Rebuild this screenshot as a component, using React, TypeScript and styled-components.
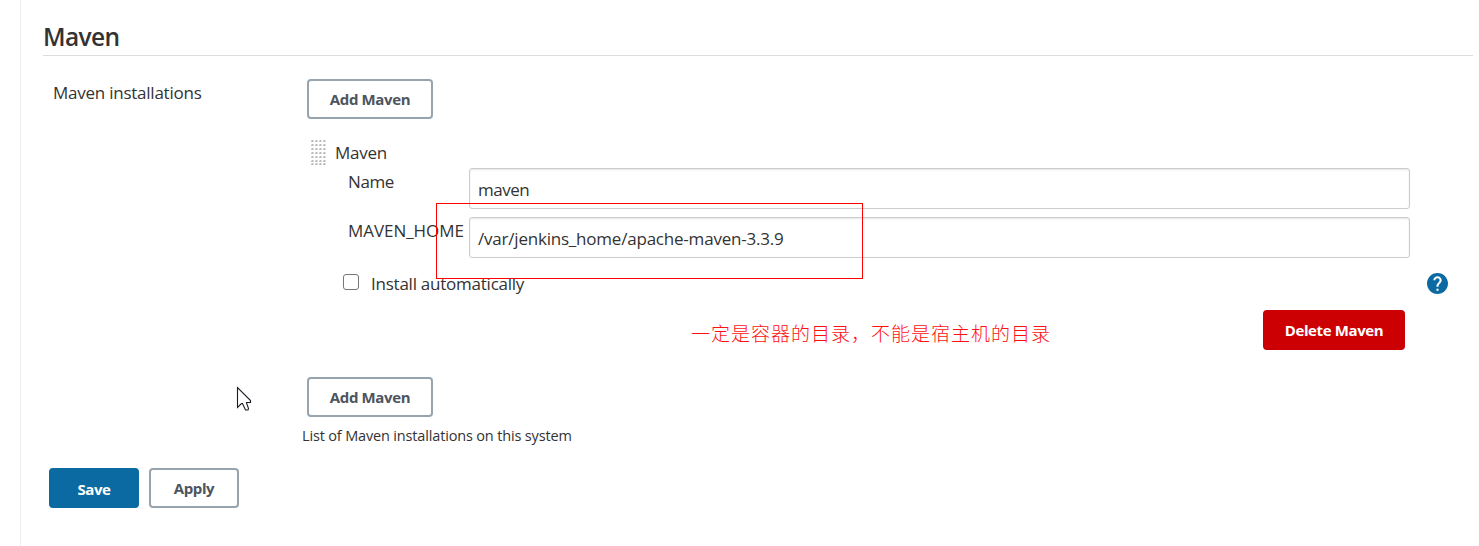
import React from "react";
import styled, { createGlobalStyle } from "styled-components";

const GlobalStyle = createGlobalStyle`
  *, *::before, *::after { box-sizing: border-box; }
  body {
    margin: 0;
    background: #fff;
    color: #333;
    font-family: "Open Sans", "Noto Sans", sans-serif;
    font-size: 17px;
    overflow: hidden;
  }
`;

const Page = styled.main`
  position: relative;
  width: 1479px;
  height: 546px;
  padding-left: 20px;
`;

const Panel = styled.section`
  height: 100%;
  padding: 20px 6px 0 22px;
  border-left: 1px solid #eaeff2;
`;

const SectionTitle = styled.h2`
  height: 36px;
  margin: 0;
  border-bottom: 1px solid #dddddd;
  font-size: 24.5px;
  font-weight: 600;
  line-height: 34px;
  letter-spacing: -0.6px;
`;

const Text = styled.span<{ $track?: number }>`
  display: block;
  line-height: 24px;
  white-space: nowrap;
  letter-spacing: ${(p) => p.$track ?? -0.24}px;
`;

const FormRow = styled.div`
  display: grid;
  grid-template-columns: 259px 1fr;
  padding-top: 23px;
`;

const SettingName = styled.div`
  padding: 2px 0 0 10px;
`;

const Setting = styled.div`
  display: flex;
  flex-direction: column;
`;

const Button = styled.button<{ $kind?: "primary" | "danger"; $width: number }>`
  width: ${(p) => p.$width}px;
  height: 40px;
  padding: ${(p) => (p.$kind === "primary" ? "2px 0 0" : "0")};
  border: 2px solid
    ${(p) => (p.$kind === "primary" ? "#0b6aa2" : p.$kind === "danger" ? "#cc0003" : "#98a4ad")};
  border-radius: 4px;
  background: ${(p) => (p.$kind === "primary" ? "#0b6aa2" : p.$kind === "danger" ? "#cc0003" : "#fff")};
  color: ${(p) => (p.$kind ? "#fff" : "#4d545d")};
  font: 700 15px/20px "Open Sans", "Noto Sans", sans-serif;
  letter-spacing: -0.38px;
  white-space: nowrap;
`;

const AddSlot = styled.div`
  padding-left: 5px;
  height: 40px;
`;

const Installation = styled.div`
  height: 258px;
  padding: 21px 69px 0 9px;
`;

const DragHeader = styled.div`
  display: flex;
  gap: 9px;
  height: 28px;
`;

const HeaderText = styled(Text)`
  line-height: 26px;
`;

const Field = styled.div`
  display: grid;
  grid-template-columns: 121px 941px;
  height: 49px;
  padding-left: 37px;
`;

const FieldLabel = styled.div`
  padding-top: 2px;
`;

const Input = styled.div`
  height: 41px;
  padding: 9px 8px 0;
  border: 1px solid #cccccc;
  border-radius: 3px;
  background: #fff;
  box-shadow: inset 0 1px 2px rgba(0, 0, 0, 0.1);
`;

const InstallRow = styled.div`
  display: flex;
  justify-content: space-between;
  width: 1137px;
  height: 44px;
  padding-left: 32px;
`;

const CheckLabel = styled.label`
  display: flex;
  gap: 12px;
  padding-top: 6px;
`;

const Checkbox = styled.input`
  appearance: none;
  width: 16px;
  height: 16px;
  margin: 2px 0 0;
  border: 1px solid #767676;
  border-radius: 3px;
  background: #fff;
`;

const HelpIcon = styled.svg`
  width: 21px;
  height: 21px;
  margin-top: 7px;
`;

const DeleteSlot = styled.div`
  display: flex;
  justify-content: flex-end;
  width: 1094px;
`;

const Description = styled.p`
  margin: 7px 0 0;
  font-size: 14.5px;
`;

const Actions = styled.div`
  display: flex;
  gap: 10px;
  padding: 20px 0 0 6px;
`;

const Highlight = styled.div`
  position: absolute;
  left: 436px;
  top: 203px;
  width: 427px;
  height: 76px;
  border: 1px solid #ff0000;
`;

const Note = styled.div`
  position: absolute;
  left: 691px;
  top: 319px;
  color: #ff1010;
  font: 200 19px/28px "Noto Sans CJK SC", sans-serif;
  letter-spacing: 1px;
  white-space: nowrap;
`;

const Pointer = styled.svg`
  position: absolute;
  left: 236px;
  top: 386px;
  width: 17px;
  height: 26px;
`;

const GripSvg = styled.svg`
  width: 15px;
  height: 26px;
`;

const Grip = () => (
  <GripSvg viewBox="0 0 15 26">
    {[0, 4, 8, 12, 16, 20, 23].map((y) =>
      [0, 4, 8, 12].map((x) => (
        <g key={`${x}-${y}`}>
          <rect x={x} y={y} width="3" height="2" fill="#dfdedb" />
          <rect x={x} y={y + 1} width="2" height="1" fill="#c6c4c0" />
          <rect x={x + 1} y={y} width="1" height="2" fill="#bdbbb6" />
        </g>
      )),
    )}
  </GripSvg>
);

export default function App() {
  return (
    <>
      <GlobalStyle />
      <Page>
        <Panel>
          <SectionTitle>Maven</SectionTitle>
          <FormRow>
            <SettingName>
              <Text>Maven installations</Text>
            </SettingName>
            <Setting>
              <AddSlot>
                <Button $width={126}>Add Maven</Button>
              </AddSlot>
              <Installation>
                <DragHeader>
                  <Grip />
                  <HeaderText>Maven</HeaderText>
                </DragHeader>
                <Field>
                  <FieldLabel>
                    <Text $track={-0.4}>Name</Text>
                  </FieldLabel>
                  <Input>
                    <Text $track={-0.5}>maven</Text>
                  </Input>
                </Field>
                <Field>
                  <FieldLabel>
                    <Text $track={-0.05}>MAVEN_HOME</Text>
                  </FieldLabel>
                  <Input>
                    <Text $track={-0.21}>/var/jenkins_home/apache-maven-3.3.9</Text>
                  </Input>
                </Field>
                <InstallRow>
                  <CheckLabel>
                    <Checkbox type="checkbox" />
                    <Text>Install automatically</Text>
                  </CheckLabel>
                  <HelpIcon viewBox="2 2 20 20">
                    <path
                      fill="#0b6aa2"
                      d="M12 2C6.48 2 2 6.48 2 12s4.48 10 10 10 10-4.48 10-10S17.52 2 12 2zm1 17h-2v-2h2v2zm2.07-7.75l-.9.92C13.45 12.9 13 13.5 13 15h-2v-.5c0-1.1.45-2.1 1.17-2.83l1.24-1.26c.37-.36.59-.86.59-1.41 0-1.1-.9-2-2-2s-2 .9-2 2H8c0-2.21 1.79-4 4-4s4 1.79 4 4c0 .88-.36 1.68-.93 2.25z"
                    />
                  </HelpIcon>
                </InstallRow>
                <DeleteSlot>
                  <Button $kind="danger" $width={142}>
                    Delete Maven
                  </Button>
                </DeleteSlot>
              </Installation>
              <AddSlot>
                <Button $width={126}>Add Maven</Button>
              </AddSlot>
              <Description>
                <Text $track={-0.16}>List of Maven installations on this system</Text>
              </Description>
            </Setting>
          </FormRow>
          <Actions>
            <Button $kind="primary" $width={90}>
              Save
            </Button>
            <Button $width={90}>Apply</Button>
          </Actions>
        </Panel>
        <Highlight />
        <Note>一定是容器的目录，不能是宿主机的目录</Note>
        <Pointer viewBox="0 0 17 26">
          <path
            d="M1.5 1.5V21.5L5.5 17.5H6.5L9.5 24H12L12.5 22.5L10.5 17V16.5H14.5V14.5Z"
            fill="#fff"
            stroke="#1b1b28"
            strokeWidth="1.1"
          />
        </Pointer>
      </Page>
    </>
  );
}
